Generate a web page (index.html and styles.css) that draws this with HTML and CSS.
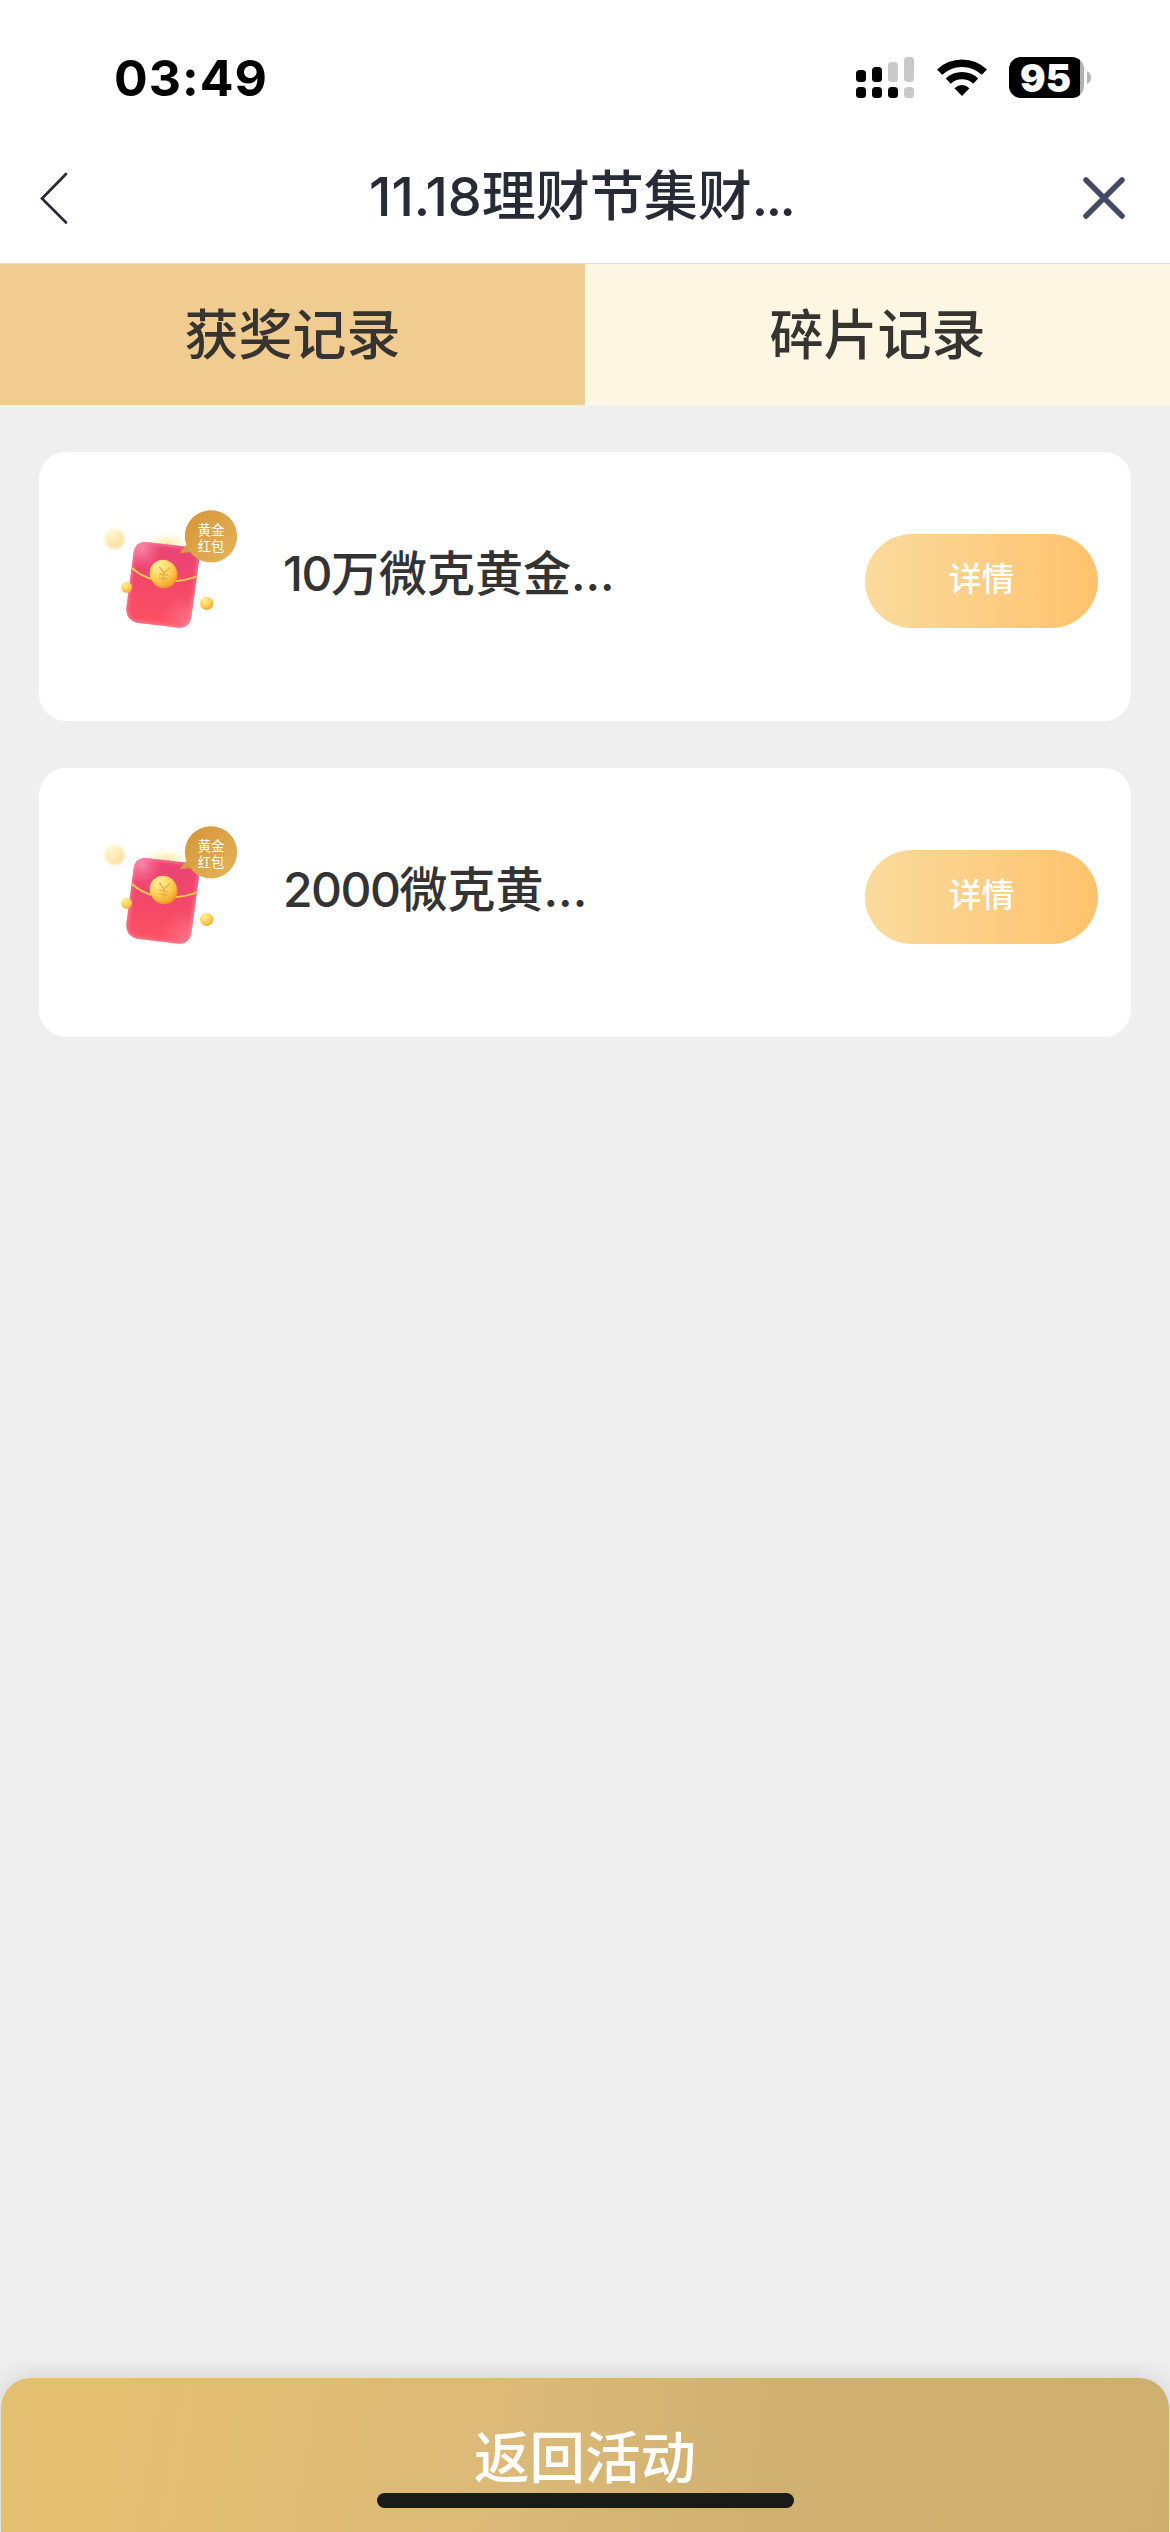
FILE: index.html
```html
<!DOCTYPE html>
<html lang="zh-CN">
<head>
<meta charset="utf-8">
<title>11.18理财节集财</title>
<link rel="stylesheet" href="styles.css">
</head>
<body>
<div class="screen">
  <header class="status">
    <span class="time">03:49</span>
    <div class="indicators">
      <svg class="signal" width="58" height="41" viewBox="0 0 58 41">
        <rect x="0" y="13" width="10" height="12" rx="3.5"/><rect x="16" y="10" width="10" height="15" rx="3.5"/>
        <rect class="off" x="32" y="5" width="10" height="20" rx="3.5"/><rect class="off" x="48" y="0" width="10" height="25" rx="3.5"/>
        <rect x="0" y="30" width="10" height="11" rx="3.5"/><rect x="16" y="30" width="10" height="11" rx="3.5"/>
        <rect x="32" y="30" width="10" height="11" rx="3.5"/><rect class="off" x="48" y="30" width="10" height="11" rx="3.5"/>
      </svg>
      <svg class="wifi" width="50" height="37" viewBox="0 0 50 37">
        <path d="M2.6 13.2A32.4 32.4 0 0 1 47.4 13.2" fill="none" stroke="#000" stroke-width="7.4"/>
        <path d="M11.3 22.1A20 20 0 0 1 38.7 22.1" fill="none" stroke="#000" stroke-width="7.2"/>
        <path d="M25 37L17.5 29.3Q25 22.9 32.5 29.3Z"/>
      </svg>
      <div class="battery"><span class="level">95</span></div>
      <svg class="nub" width="4" height="13" viewBox="0 0 4 13"><path d="M0 0Q4 2 4 6.500T0 13Z" fill="#b5b5b5"/></svg>
    </div>
  </header>
  <nav class="navbar">
    <svg class="back" width="32" height="56" viewBox="0 0 32 56"><path d="M29 4L5 28.500L29 52.500" fill="none" stroke="#272b35" stroke-width="2.700" stroke-linecap="round"/></svg>
    <h1 class="title">11.18理财节集财<span class="dots">...</span></h1>
    <svg class="close" width="44" height="44" viewBox="0 0 44 44"><path d="M4 4L40 40M40 4L4 40" fill="none" stroke="#434b64" stroke-width="5.500" stroke-linecap="round"/></svg>
  </nav>
  <div class="tabs">
    <div class="tab active">获奖记录</div>
    <div class="tab">碎片记录</div>
  </div>
  <main class="list">
    <article class="card">
      <svg class="gift" width="170" height="160" viewBox="0 0 510 480">
        <defs>
          <linearGradient id="red" x1="0" y1="0" x2="0" y2="1"><stop offset="0" stop-color="#e74278"/><stop offset=".5" stop-color="#f3486a"/><stop offset="1" stop-color="#ff5261"/></linearGradient>
          <radialGradient id="coin" cx=".35" cy=".25" r=".8"><stop offset="0" stop-color="#fff09b"/><stop offset=".55" stop-color="#ffd35c"/><stop offset="1" stop-color="#f5a72b"/></radialGradient>
          <linearGradient id="badge" x1="0" y1="0" x2="1" y2="1"><stop offset="0" stop-color="#d69438"/><stop offset="1" stop-color="#e4b45c"/></linearGradient>
          <radialGradient id="shine"><stop offset="0" stop-color="#ffb7cf" stop-opacity=".6"/><stop offset="1" stop-color="#ff8fac" stop-opacity="0"/></radialGradient>
          <radialGradient id="glow"><stop offset="0" stop-color="#ffe79b" stop-opacity=".95"/><stop offset="1" stop-color="#fff6d5" stop-opacity="0"/></radialGradient>
          <filter id="soft" x="-20%" y="-20%" width="140%" height="140%"><feGaussianBlur stdDeviation="5"/></filter>
          <clipPath id="packet"><path d="M168 156L300 171Q330 176 328 207L304 382Q299 414 267 413L141 398Q107 390 109 354L131 186Q137 154 168 156Z"/></clipPath>
        </defs>
        <ellipse cx="232" cy="160" rx="75" ry="36" fill="url(#glow)"/>
        <circle cx="74" cy="147" r="30" fill="url(#coin)" opacity=".48" filter="url(#soft)"/>
        <g clip-path="url(#packet)">
          <rect x="100" y="145" width="235" height="275" fill="url(#red)"/>
          <circle cx="155" cy="175" r="60" fill="url(#shine)"/>
          <circle cx="285" cy="385" r="72" fill="url(#shine)" opacity=".5"/>
          <path d="M168 156L300 171Q330 176 328 207L304 382Q299 414 267 413L141 398Q107 390 109 354L131 186Q137 154 168 156Z" fill="none" stroke="#ff9dac" stroke-opacity=".4" stroke-width="14" filter="url(#soft)"/>
          <path d="M126 234Q155 260 190 268Q260 284 326 257" fill="none" stroke="#ffc84a" stroke-width="6"/>
        </g>
        <circle cx="222" cy="254" r="41" fill="#f09a2c"/>
        <circle cx="219" cy="249" r="40" fill="url(#coin)"/>
        <path d="M208 230L222 249L239 233M222 249L219 274M208 252L234 256M207 263L232 267" fill="none" stroke="#efaa42" stroke-width="4"/>
        <circle cx="110" cy="292" r="16.500" fill="url(#coin)"/>
        <circle cx="350" cy="340" r="20" fill="url(#coin)"/>
        <path d="M289 165L268 190Q291 187 307 186Z" fill="#d69b43"/>
        <circle cx="363" cy="139" r="78.500" fill="url(#badge)"/>
        <text class="badge-text" x="363" y="134">黄金</text>
        <text class="badge-text" x="363" y="183">红包</text>
      </svg>
      <div class="name"><span class="num">10</span>万微克黄金<span>...</span></div>
      <div class="button">详情</div>
    </article>
    <article class="card">
      <svg class="gift" width="170" height="160" viewBox="0 0 510 480">
        <ellipse cx="232" cy="160" rx="75" ry="36" fill="url(#glow)"/>
        <circle cx="74" cy="147" r="30" fill="url(#coin)" opacity=".48" filter="url(#soft)"/>
        <g clip-path="url(#packet)">
          <rect x="100" y="145" width="235" height="275" fill="url(#red)"/>
          <circle cx="155" cy="175" r="60" fill="url(#shine)"/>
          <circle cx="285" cy="385" r="72" fill="url(#shine)" opacity=".5"/>
          <path d="M168 156L300 171Q330 176 328 207L304 382Q299 414 267 413L141 398Q107 390 109 354L131 186Q137 154 168 156Z" fill="none" stroke="#ff9dac" stroke-opacity=".4" stroke-width="14" filter="url(#soft)"/>
          <path d="M126 234Q155 260 190 268Q260 284 326 257" fill="none" stroke="#ffc84a" stroke-width="6"/>
        </g>
        <circle cx="222" cy="254" r="41" fill="#f09a2c"/>
        <circle cx="219" cy="249" r="40" fill="url(#coin)"/>
        <path d="M208 230L222 249L239 233M222 249L219 274M208 252L234 256M207 263L232 267" fill="none" stroke="#efaa42" stroke-width="4"/>
        <circle cx="110" cy="292" r="16.500" fill="url(#coin)"/>
        <circle cx="350" cy="340" r="20" fill="url(#coin)"/>
        <path d="M289 165L268 190Q291 187 307 186Z" fill="#d69b43"/>
        <circle cx="363" cy="139" r="78.500" fill="url(#badge)"/>
        <text class="badge-text" x="363" y="134">黄金</text>
        <text class="badge-text" x="363" y="183">红包</text>
      </svg>
      <div class="name"><span class="num">2000</span>微克黄<span>...</span></div>
      <div class="button">详情</div>
    </article>
  </main>
  <footer class="footer">
    <div class="return">返回活动</div>
    <div class="home-indicator"></div>
  </footer>
</div>
</body>
</html>
```
FILE: styles.css
```css
* { box-sizing: border-box; }
body { margin: 0; background: #efefef; font-family: Inter, "Noto Sans CJK SC", sans-serif; }
.screen { width: 1170px; height: 2532px; display: flex; flex-direction: column; overflow: hidden; position: relative; }
.status { height: 141px; flex: none; background: #fff; display: flex; justify-content: space-between; padding: 57px 79px 0 114px; }
.time { font-weight: 750; font-size: 50px; line-height: 42px; height: 42px; letter-spacing: 1px; color: #000; }
.indicators { display: flex; height: 41px; }
.signal .off { fill: #c9c9c9; }
.wifi { margin: 2px 0 0 23px; }
.battery { margin-left: 22px; width: 75px; height: 41px; border-radius: 12px; background: linear-gradient(90deg, #000 71px, #b0b0b0 71px); color: #fff; display: flex; padding-left: 11px; }
.level { font-weight: 900; font-size: 38px; line-height: 42px; letter-spacing: 0; }
.nub { margin: 14px 0 0 3px; }
.navbar { height: 123px; flex: none; background: #fff; border-bottom: 1px solid #dedfe3; display: flex; align-items: flex-start; padding: 0 44px 0 37px; color: #272b35; }
.back { margin-top: 29px; }
.close { margin: 35px 0 0 auto; }
.title { margin: 16px 0 0 300px; font-size: 54px; font-weight: 500; line-height: 80px; height: 80px; white-space: nowrap; }
.title .dots { letter-spacing: -2.6px; }
.tabs { display: flex; height: 141px; flex: none; }
.tab { flex: 1; background: #fcf6e3; color: #363431; font-size: 54px; font-weight: 500; line-height: 143px; height: 141px; text-align: center; }
.tab.active { background: #f0cc90; }
.list { flex: 1; display: flex; flex-direction: column; gap: 47.5px; padding: 47px 39px 0; background: #efefef; }
.card { height: 268.5px; flex: none; background: #fff; border-radius: 27px; display: flex; padding: 0 33px 0 51px; }
.gift { margin-top: 38px; }
.badge-text { font-family: "Noto Sans CJK SC", sans-serif; font-size: 40px; font-weight: 400; fill: #fff; text-anchor: middle; }
.name { margin: 87px 0 0 23px; flex: 1; font-size: 48px; line-height: 70px; height: 70px; font-weight: 500; color: #333; white-space: nowrap; }
.name .num { letter-spacing: -1.5px; }
.button { margin-top: 82px; width: 233px; height: 94px; border-radius: 47px; background: linear-gradient(90deg, #fadb9d, #ffc26d); color: #fff; font-size: 33px; font-weight: 500; line-height: 91px; text-align: center; }
.footer { position: relative; height: 170px; flex: none; background: #efefef; padding: 16px 1px 0; overflow: hidden; }
.return { height: 160px; border-radius: 30px 30px 0 0; background: linear-gradient(100deg, #e4be71 10%, #dbb978 45%, #d0b171 65%, #ceaf6d 100%); box-shadow: 0 0 30px rgba(0,0,0,.14); color: #fff; font-size: 55.500px; font-weight: 500; line-height: 159px; text-align: center; }
.home-indicator { position: absolute; left: 377px; bottom: 24px; width: 417px; height: 15px; border-radius: 8px; background: #1a1a18; }
```
